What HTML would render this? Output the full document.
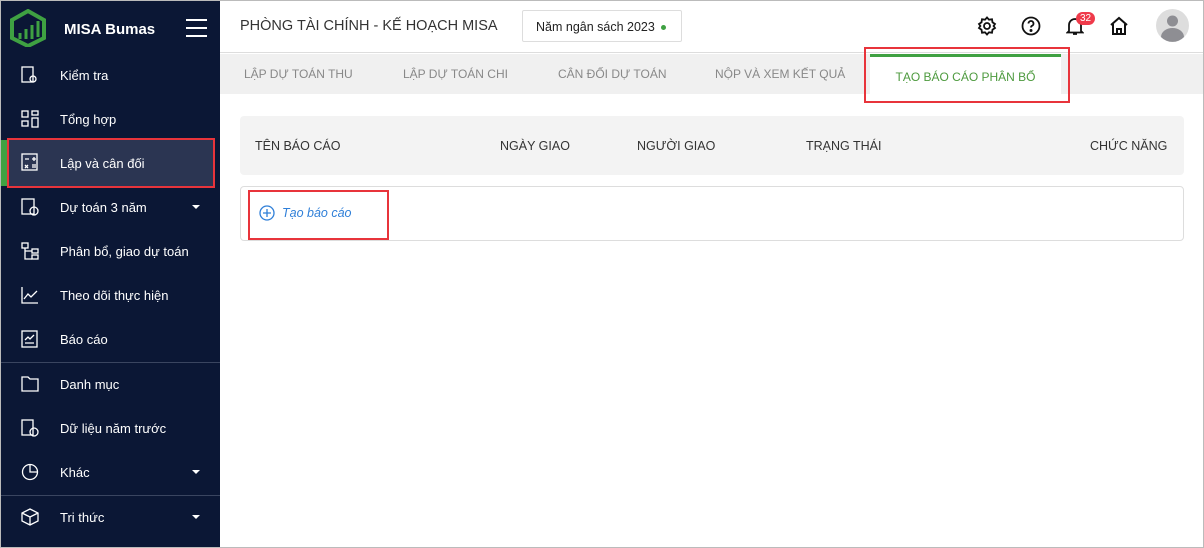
<!DOCTYPE html>
<html><head><meta charset="utf-8"><style>
*{box-sizing:border-box;margin:0;padding:0}
body{width:1204px;height:548px;position:relative;font-family:"Liberation Sans",sans-serif;background:#fff;overflow:hidden}
.frame{position:absolute;left:0;top:0;width:1204px;height:548px;border:1px solid #bbb;pointer-events:none}
.sb{position:absolute;left:0;top:0;width:220px;height:548px;background:#0b1735;color:#fff}
.it{position:absolute;left:0;width:220px;height:44px;display:flex;align-items:center;font-size:13px}
.it svg{position:absolute;left:21px;top:13px}
.it span{position:absolute;left:60px}
.car{position:absolute;left:192px;width:0;height:0;border-left:4px solid transparent;border-right:4px solid transparent;border-top:4px solid #fff}
.sep{position:absolute;left:0;width:220px;height:1px;background:#3a4560}
.red{position:absolute;border:2px solid #e8343b}
.hdr{position:absolute;left:220px;top:0;right:0;height:53px;border-bottom:1px solid #ddd}
.tabs{position:absolute;left:220px;top:54px;right:0;height:40px;background:#f0f0f0}
.tab{position:absolute;top:13px;font-size:12px;color:#888}
</style></head><body>
<div class="sb">
<svg style="position:absolute;left:10px;top:9px" width="36" height="38" viewBox="0 0 36 38"><path d="M18 2 L34 11 V29 L18 37 L2 29 V11 Z" fill="none" stroke="#3fa142" stroke-width="4"/><path d="M10 30 V24 M16 30 V20 M22 30 V16 M28 28 V12" stroke="#3fa142" stroke-width="3"/></svg>
<div style="position:absolute;left:64px;top:21px;font-size:15px;font-weight:bold">MISA Bumas</div>
<div style="position:absolute;left:186px;top:19px;width:21px;height:2px;background:#fff;box-shadow:0 8px 0 #fff,0 16px 0 #fff"></div>
<div class="it" style="top:53px"><svg width="18" height="18" fill="none" stroke="#fff" stroke-width="1.3"><rect x="1" y="1" width="11" height="15"/><circle cx="12" cy="13" r="3"/></svg><span>Kiểm tra</span></div>
<div class="it" style="top:97px"><svg width="18" height="18" fill="none" stroke="#fff" stroke-width="1.3"><rect x="1" y="1" width="6" height="6"/><rect x="11" y="1" width="6" height="4"/><rect x="1" y="11" width="6" height="5"/><rect x="11" y="8" width="6" height="9"/></svg><span>Tổng hợp</span></div>
<div style="position:absolute;left:0;top:140px;width:7px;height:46px;background:#3fa142"></div>
<div class="it" style="top:140px;left:7px;width:207px;height:46px;background:#2b3552"><svg style="left:14px" width="18" height="18" fill="none" stroke="#fff" stroke-width="1.3"><rect x="1" y="1" width="15" height="16"/><path d="M4 6h4M11 6h4M13 4v4M4 12l3 3M7 12l-3 3M11 12h4M11 14h4"/></svg><span style="left:53px">Lập và cân đối</span></div>
<div class="red" style="left:7px;top:138px;width:208px;height:50px"></div>
<div class="it" style="top:185px"><svg width="18" height="18" fill="none" stroke="#fff" stroke-width="1.3"><rect x="1" y="1" width="12" height="15"/><circle cx="13" cy="13" r="4"/></svg><span>Dự toán 3 năm</span><i class="car" style="top:20px"></i></div>
<div class="it" style="top:229px"><svg width="18" height="18" fill="none" stroke="#fff" stroke-width="1.3"><rect x="1" y="1" width="6" height="5"/><rect x="11" y="7" width="6" height="4"/><rect x="11" y="13" width="6" height="4"/><path d="M4 6v11h7M4 9h7"/></svg><span>Phân bổ, giao dự toán</span></div>
<div class="it" style="top:273px"><svg width="18" height="18" fill="none" stroke="#fff" stroke-width="1.3"><path d="M1 1v16h16M3 13l4-5 3 3 6-6"/></svg><span>Theo dõi thực hiện</span></div>
<div class="it" style="top:317px"><svg width="18" height="18" fill="none" stroke="#fff" stroke-width="1.3"><rect x="1" y="1" width="15" height="16"/><path d="M4 13h9M4 10l3-3 2 2 4-4"/></svg><span>Báo cáo</span></div>
<div class="sep" style="top:362px"></div>
<div class="it" style="top:362px"><svg width="18" height="18" fill="none" stroke="#fff" stroke-width="1.3"><path d="M1 2h6l2 2h8v12H1z"/></svg><span>Danh mục</span></div>
<div class="it" style="top:406px"><svg width="18" height="18" fill="none" stroke="#fff" stroke-width="1.3"><rect x="1" y="1" width="11" height="15"/><circle cx="13" cy="13" r="4"/></svg><span>Dữ liệu năm trước</span></div>
<div class="it" style="top:450px"><svg width="18" height="18" fill="none" stroke="#fff" stroke-width="1.3"><circle cx="9" cy="9" r="7.5"/><path d="M9 1.5V9h7.5"/></svg><span>Khác</span><i class="car" style="top:20px"></i></div>
<div class="sep" style="top:495px"></div>
<div class="it" style="top:495px"><svg width="18" height="18" fill="none" stroke="#fff" stroke-width="1.3"><path d="M9 1l8 4v8l-8 4-8-4V5zM1 5l8 4 8-4M9 9v8"/></svg><span>Tri thức</span><i class="car" style="top:20px"></i></div>
</div>
<div class="hdr">
<div style="position:absolute;left:20px;top:18px;font-size:14.5px;color:#333">PHÒNG TÀI CHÍNH - KẾ HOẠCH MISA</div>
<div style="position:absolute;left:302px;top:10px;width:160px;height:32px;border:1px solid #ddd;border-radius:2px;font-size:12.5px;color:#222;padding:9px 0 0 13px">Năm ngân sách 2023 <span style="display:inline-block;width:5px;height:5px;border-radius:50%;background:#3fa142;vertical-align:middle;margin-left:3px"></span></div>
<svg style="position:absolute;left:757px;top:16px" width="20" height="20" viewBox="0 0 20 20" fill="none" stroke="#111" stroke-width="1.8"><circle cx="10" cy="10" r="3"/><path d="M10 1.5l2 2.2 3-.4.5 3 2.5 1.7-1.4 2 1.4 2-2.5 1.7-.5 3-3-.4-2 2.2-2-2.2-3 .4-.5-3L2 12l1.4-2L2 8l2.5-1.7.5-3 3 .4z"/></svg>
<svg style="position:absolute;left:801px;top:16px" width="20" height="20" fill="none" stroke="#111" stroke-width="1.8"><circle cx="10" cy="10" r="8.5"/><path d="M7.5 7.5a2.5 2.5 0 1 1 3.5 2.3c-.8.4-1 .9-1 1.7"/><circle cx="10" cy="14.5" r=".6" fill="#111"/></svg>
<svg style="position:absolute;left:846px;top:16px" width="18" height="20" fill="none" stroke="#111" stroke-width="1.8"><path d="M3 15V9a6 6 0 0 1 12 0v6l1.5 1.5h-15zM7 18h4"/></svg>
<div style="position:absolute;left:856px;top:12px;background:#ef3a4a;color:#fff;font-size:10px;border-radius:8px;padding:1px 4px">32</div>
<svg style="position:absolute;left:889px;top:16px" width="20" height="20" fill="none" stroke="#111" stroke-width="2"><path d="M2 9l8-7 8 7M4 8v10h12V8M8 18v-5h4v5"/></svg>
<svg style="position:absolute;left:936px;top:9px" width="33" height="33"><circle cx="16.5" cy="16.5" r="16.5" fill="#ddd"/><circle cx="16.5" cy="12" r="5.5" fill="#8e8e93"/><path d="M5 28a11.5 9 0 0 1 23 0a16 16 0 0 1-23 0z" fill="#8e8e93"/></svg>
</div>
<div class="tabs">
<div class="tab" style="left:24px">LẬP DỰ TOÁN THU</div>
<div class="tab" style="left:183px">LẬP DỰ TOÁN CHI</div>
<div class="tab" style="left:338px">CÂN ĐỐI DỰ TOÁN</div>
<div class="tab" style="left:495px">NỘP VÀ XEM KẾT QUẢ</div>
<div style="position:absolute;left:650px;top:0;width:191px;height:42px;background:#fff;border-top:3px solid #3fa142;font-size:12px;color:#4d9a3e;text-align:center;padding-top:13px">TẠO BÁO CÁO PHÂN BỔ</div>
</div>
<div class="red" style="left:864px;top:47px;width:206px;height:56px"></div>
<div style="position:absolute;left:240px;top:116px;width:944px;height:59px;background:#f3f3f3;border-radius:4px;font-size:12.5px;color:#333">
<span style="position:absolute;left:15px;top:23px">TÊN BÁO CÁO</span>
<span style="position:absolute;left:260px;top:23px">NGÀY GIAO</span>
<span style="position:absolute;left:397px;top:23px">NGƯỜI GIAO</span>
<span style="position:absolute;left:566px;top:23px">TRẠNG THÁI</span>
<span style="position:absolute;left:850px;top:23px">CHỨC NĂNG</span>
</div>
<div style="position:absolute;left:240px;top:186px;width:944px;height:55px;border:1px solid #ddd;border-radius:4px"></div>
<svg style="position:absolute;left:259px;top:205px" width="16" height="16" fill="none" stroke="#2f7fd8" stroke-width="1.3"><circle cx="8" cy="8" r="7"/><path d="M8 4v8M4 8h8"/></svg>
<div style="position:absolute;left:282px;top:206px;font-size:12.5px;font-style:italic;color:#2f7fd8">Tạo báo cáo</div>
<div class="red" style="left:248px;top:190px;width:141px;height:50px"></div>
<div class="frame"></div>
</body></html>
